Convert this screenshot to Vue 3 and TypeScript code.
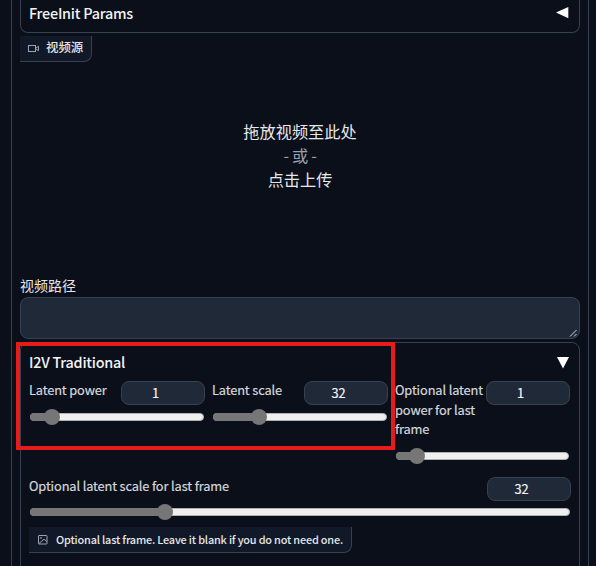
<script setup lang="ts">
interface Slider {
  label: string
  value: number
  thumb: number
}

const sliders: Slider[] = [
  { label: 'Latent power', value: 1, thumb: 12.8 },
  { label: 'Latent scale', value: 32, thumb: 26.5 },
  { label: 'Optional latent power for last frame', value: 1, thumb: 12.3 },
]
const wide: Slider = { label: 'Optional latent scale for last frame', value: 32, thumb: 25 }
</script>

<template>
  <main class="page">
    <div class="panel">
      <section class="accordion closed">
        <span class="title">FreeInit Params</span>
        <svg class="arrow" width="13" height="12" viewBox="0 0 13 12"><path d="M0 5.5 12.3 0V11.3Z" fill="#fff" /></svg>
      </section>

      <section class="video">
        <div class="tab short">
          <svg class="cam" width="12" height="9" viewBox="0 0 12 9" fill="none" stroke="#9ca3af" stroke-width="1">
            <rect x=".5" y="1.5" width="7" height="6" />
            <path d="M8 4 10.5 2.3V6.7L8 5" />
          </svg>
          <span class="tab-zh">视频源</span>
        </div>
        <div class="drop">
          <span>拖放视频至此处</span>
          <span class="or">- 或 -</span>
          <span>点击上传</span>
        </div>
      </section>

      <label class="path-label">视频路径</label>
      <div class="textarea">
        <svg width="9" height="9" viewBox="0 0 9 9" fill="none" stroke="#d6d9de"><path d="M1 7.5 7.5 1M5 7.5 7.5 5" /></svg>
      </div>

      <section class="accordion open">
        <div class="head">
          <span class="title">I2V Traditional</span>
          <svg class="arrow" width="12" height="12" viewBox="0 0 12 12"><path d="M0 0H12L6 11.5Z" fill="#fff" /></svg>
        </div>
        <div class="row">
          <div v-for="s in sliders" :key="s.label" class="field">
            <div class="top">
              <span class="label">{{ s.label }}</span>
              <span class="number">{{ s.value }}</span>
            </div>
            <div class="track">
              <div class="fill" :style="{ width: s.thumb + '%' }"><i class="thumb"></i></div>
            </div>
          </div>
        </div>
        <div class="field wide">
          <div class="top">
            <span class="label">{{ wide.label }}</span>
            <span class="number">{{ wide.value }}</span>
          </div>
          <div class="track">
            <div class="fill" :style="{ width: wide.thumb + '%' }"><i class="thumb"></i></div>
          </div>
        </div>
        <div class="tab long">
          <svg width="10" height="10" viewBox="0 0 10 10" fill="none" stroke="#9ca3af" stroke-width="1">
            <rect x=".5" y=".5" width="8.5" height="8.5" rx=".5" />
            <path d="M1 8.5 6 4.2 9 6.7" />
            <circle cx="3" cy="3" r=".5" />
          </svg>
          <span class="tab-en">Optional last frame. Leave it blank if you do not need one.</span>
        </div>
      </section>
    </div>
    <div class="highlight"></div>
  </main>
</template>

<style>
body {
  background: #0b0f19;
  overflow: hidden;
}
</style>

<style scoped>
* {
  box-sizing: border-box;
}
.page {
  position: relative;
  width: 596px;
  height: 566px;
  padding: 0 7px 0 11px;
  overflow: hidden;
  background: #0b0f19;
  color: #e5e7eb;
  font-family: "Noto Sans CJK SC", sans-serif;
}
.panel {
  height: 566px;
  padding: 0 8px;
  border: solid #374151;
  border-width: 0 1px;
}
.accordion {
  border: 1px solid #374151;
}
.closed {
  height: 33px;
  padding: 2px 10px 0 8px;
  border-top: 0;
  border-radius: 0 0 8px 8px;
  display: flex;
  justify-content: space-between;
}
.closed .arrow {
  margin-top: 5px;
}
.title {
  font-size: 14.4px;
  line-height: 21px;
  font-weight: 500;
  letter-spacing: -0.24px;
  color: #f3f4f6;
  white-space: nowrap;
}
.video {
  height: 241px;
  margin-top: 3px;
}
.tab {
  display: flex;
  align-items: center;
  height: 26px;
  padding-left: 8px;
  background: #111827;
  border: solid #374151;
  border-width: 0 1px 1px 0;
  border-radius: 0 0 8px 0;
  color: #e5e7eb;
  white-space: nowrap;
}
.tab svg {
  flex: none;
}
.short {
  width: 72px;
}
.tab-zh {
  margin: -3px 0 0 6px;
  font-size: 12.4px;
  font-weight: 500;
  line-height: 20px;
}
.drop {
  display: flex;
  flex-direction: column;
  align-items: center;
  margin-top: 57px;
  font-size: 16.2px;
  line-height: 24px;
}
.or {
  color: #9ca3af;
  letter-spacing: -0.3px;
}
.path-label {
  display: block;
  height: 20px;
  font-size: 14px;
  line-height: 16px;
}
.textarea {
  display: flex;
  align-items: flex-end;
  justify-content: flex-end;
  height: 42px;
  padding: 0 1px 0 0;
  background: #1f2937;
  border: 1px solid #374151;
  border-radius: 8px;
}
.open {
  height: 240px;
  margin-top: 3px;
  padding: 8px 8px 0 8px;
  border-radius: 8px;
}
.head {
  display: flex;
  justify-content: space-between;
  height: 30px;
}
.open .arrow {
  margin: 6px 2px 0 0;
}
.row {
  display: grid;
  grid-template-columns: 176px 176px 175px;
  gap: 7px;
  height: 96px;
}
.top {
  display: flex;
  justify-content: space-between;
  align-items: flex-start;
}
.label {
  width: 93px;
  margin: -1px -2px 0 0;
  padding-bottom: 5px;
  font-size: 12.8px;
  line-height: 19.5px;
  letter-spacing: -0.13px;
  color: #d5d8de;
  -webkit-text-stroke: 0.2px #d5d8de;
}
.number {
  flex: none;
  width: 84px;
  height: 24px;
  padding-right: 15px;
  border: 1px solid #374151;
  border-radius: 8px;
  background: #1f2937;
  color: #f3f4f6;
  font-size: 12.8px;
  line-height: 22px;
  text-align: center;
  -webkit-text-stroke: 0.2px #f3f4f6;
}
.track {
  height: 8px;
  margin: 8px 1px 0;
  border: 1px solid #b2b2b2;
  border-radius: 4px;
  background: #efefef;
}
.fill {
  position: relative;
  height: 8px;
  margin: -1px 0 0 -1px;
  border-radius: 4px 0 0 4px;
  background: #767676;
}
.thumb {
  position: absolute;
  top: -4px;
  right: -8px;
  width: 16px;
  height: 16px;
  border-radius: 50%;
  background: #767676;
}
.wide .label {
  width: auto;
}
.wide .track {
  margin-top: 7px;
}
.long {
  width: 323px;
  margin-top: 11px;
  padding-left: 9px;
}
.tab-en {
  margin: -2px 0 0 8px;
  font-size: 10.9px;
  font-weight: 500;
  line-height: 20px;
  letter-spacing: -0.19px;
}
.highlight {
  position: absolute;
  left: 16px;
  top: 342px;
  width: 379px;
  height: 108px;
  border: 4px solid #e81b1b;
}
</style>
